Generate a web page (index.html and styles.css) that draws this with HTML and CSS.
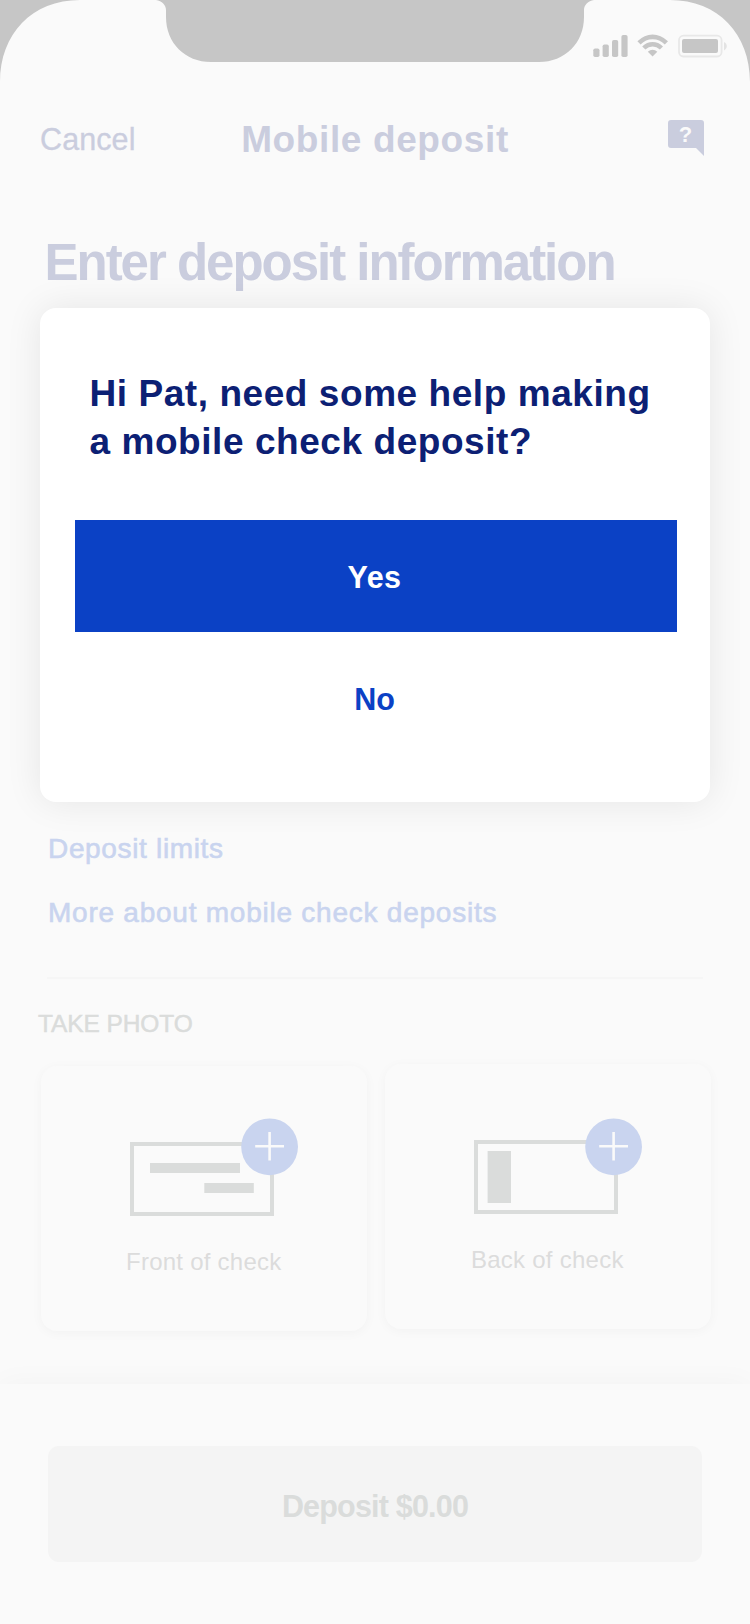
FILE: index.html
```
<!DOCTYPE html>
<html lang="en">
<head>
<meta charset="utf-8">
<title>Mobile deposit</title>
<link rel="stylesheet" href="styles.css">
</head>
<body>
<div class="screen">
  <div class="status-bar">
    <svg class="status-art" viewBox="0 0 750 90" width="750" height="90" aria-hidden="true">
      <path class="bezel" d="M0 0H80C32 0 0 34 0 82Z"/>
      <path class="bezel" d="M750 0H670C718 0 750 34 750 82Z"/>
      <path class="bezel" d="M156 0C162 1 166 5 166 10V17C166 43 185 62 211 62H539C565 62 584 43 584 17V10C584 5 588 1 594 0Z"/>
      <g class="glyph">
        <rect x="593.3" y="48.5" width="6.2" height="8.5" rx="1.8"/>
        <rect x="602.6" y="44.5" width="6.2" height="12.5" rx="1.8"/>
        <rect x="612" y="40" width="6.2" height="17" rx="1.8"/>
        <rect x="621.4" y="35" width="6.2" height="22" rx="1.8"/>
        <path d="M637.4 41.2Q644.4 34.4 652.6 34.4T668 41.2L664.8 44.4Q659.6 39.2 652.6 39.2T640.6 44.4Z"/>
        <path d="M642.2 46.4Q646.8 42 652.6 42T663 46.4L659.9 49.6Q656.6 46.5 652.6 46.5T645.4 49.6Z"/>
        <path d="M647.8 51.8Q650 49.8 652.6 49.8T657.3 51.8L652.6 56.6Z"/>
        <rect x="682" y="39" width="36" height="14" rx="2"/>
      </g>
      <rect class="battery-shell" x="679" y="35.7" width="42.6" height="20.8" rx="4.5"/>
      <path class="battery-tip" d="M724 42V50.4C727.7 48.6 727.7 43.8 724 42Z"/>
    </svg>
  </div>

  <header class="nav">
    <a class="nav-cancel">Cancel</a>
    <h1 class="nav-title">Mobile deposit</h1>
    <span class="nav-help">
      <svg viewBox="0 0 36 36" width="36" height="36" aria-hidden="true">
        <path d="M3 0H33Q36 0 36 3V36L28 28H3Q0 28 0 25V3Q0 0 3 0Z"/>
        <text x="17.6" y="22" text-anchor="middle">?</text>
      </svg>
    </span>
  </header>

  <main class="content">
    <h2 class="heading">Enter deposit information</h2>

    <nav class="links">
      <a class="link link-limits">Deposit limits</a>
      <a class="link link-more">More about mobile check deposits</a>
    </nav>
    <hr class="divider">

    <h3 class="section-label">TAKE PHOTO</h3>
    <div class="cards">
      <section class="card card-front">
        <svg class="check" viewBox="0 0 168 98" width="168" height="98" aria-hidden="true">
          <rect class="check-outline" x="2" y="26" width="140" height="70"/>
          <rect class="check-fill" x="20" y="45" width="90" height="10"/>
          <rect class="check-fill" x="74.3" y="65" width="49.5" height="10"/>
          <circle class="add" cx="139.6" cy="28.8" r="28.4"/>
          <path class="plus" d="M125.2 28.2H154M139.6 14V42.5"/>
        </svg>
        <p class="card-label">Front of check</p>
      </section>
      <section class="card card-back">
        <svg class="check" viewBox="0 0 168 98" width="168" height="98" aria-hidden="true">
          <rect class="check-outline" x="2" y="24" width="140" height="70"/>
          <rect class="check-fill" x="13.6" y="33" width="23.4" height="52"/>
          <circle class="add" cx="139.6" cy="28.8" r="28.4"/>
          <path class="plus" d="M125.2 28.2H154M139.6 14V42.5"/>
        </svg>
        <p class="card-label">Back of check</p>
      </section>
    </div>
  </main>

  <footer class="footer">
    <button class="deposit">Deposit $0.00</button>
  </footer>

  <div class="dialog" role="dialog">
    <p class="question">Hi Pat, need some help making<br>a mobile check deposit?</p>
    <button class="yes">Yes</button>
    <button class="no">No</button>
  </div>
</div>
</body>
</html>
```
FILE: styles.css
```
* {
  box-sizing: border-box;
}

body {
  margin: 0;
  font-family: "Liberation Sans", Arial, sans-serif;
}

h1, h2, h3, p {
  margin: 0;
}

button {
  border: 0;
  padding: 0;
  font-family: inherit;
}

.screen {
  position: relative;
  display: flex;
  flex-direction: column;
  width: 750px;
  height: 1624px;
  overflow: hidden;
  background: #fafafa;
}

.status-bar {
  height: 120px;
}

.status-art {
  display: block;
}

.bezel, .glyph {
  fill: #c6c6c6;
}

.battery-shell {
  fill: none;
  stroke: #e8e8e8;
  stroke-width: 1.8;
}

.battery-tip {
  fill: #e3e3e3;
}

.nav {
  display: grid;
  grid-template-columns: 1fr auto 1fr;
  height: 113px;
  padding: 0 46px 0 40px;
  color: #cacdde;
  line-height: 40px;
}

.nav-cancel {
  margin-top: -1px;
  font-size: 30.5px;
  letter-spacing: 0.1px;
  -webkit-text-stroke: 0.3px;
}

.nav-title {
  margin-left: 6px;
  font-size: 37px;
  font-weight: bold;
  letter-spacing: 0.62px;
}

.nav-help {
  justify-self: end;
  line-height: 0;
}

.nav-help path {
  fill: #cacdde;
}

.nav-help text {
  fill: #fafafa;
  font-size: 22px;
  font-weight: bold;
}

.content {
  display: flex;
  flex-direction: column;
  height: 1151px;
}

.heading {
  padding-left: 44.5px;
  color: #cacdde;
  font-size: 51px;
  line-height: 60px;
  letter-spacing: -2.02px;
}

.links {
  display: flex;
  flex-direction: column;
  gap: 24px;
  margin-top: 536px;
  padding-left: 48px;
  color: #c9d4ef;
  font-size: 28px;
  line-height: 40px;
}

.link {
  -webkit-text-stroke: 0.6px;
}

.link-limits {
  letter-spacing: 0.66px;
}

.link-more {
  letter-spacing: 0.76px;
}

.divider {
  width: 656px;
  height: 2px;
  margin: 44px 0 0 47px;
  border: 0;
  background: #f6f6f6;
}

.section-label {
  margin-top: 25px;
  padding-left: 38px;
  color: #dadcdb;
  font-size: 24.5px;
  font-weight: normal;
  line-height: 40px;
  letter-spacing: -0.1px;
  -webkit-text-stroke: 0.5px;
}

.cards {
  display: flex;
  align-items: flex-start;
  gap: 18px;
  margin-top: 20px;
  padding-left: 41px;
}

.card {
  display: flex;
  flex-direction: column;
  width: 326px;
  height: 265px;
  border-radius: 16px;
  background: #fafafa;
  box-shadow: 0 2px 12px rgba(0, 0, 0, 0.035);
}

.card-front {
  margin-top: 2px;
  padding: 52px 0 0 89px;
}

.card-back {
  padding: 54px 0 0 89px;
}

.card-label {
  margin-left: -4px;
  color: #dcdcdc;
  font-size: 24px;
  line-height: 32px;
  letter-spacing: 0.25px;
}

.card-front .card-label {
  margin-top: 30px;
}

.card-back .card-label {
  margin-top: 28px;
  margin-left: -3px;
}

.footer {
  flex: 1;
  padding: 62px 48px 0;
  background: #fafafa;
  box-shadow: 0 0 28px rgba(0, 0, 0, 0.035);
}

.deposit {
  display: block;
  width: 654px;
  height: 116px;
  padding-top: 5px;
  border-radius: 11px;
  background: #f4f4f4;
  color: #dadcdb;
  font-size: 30.5px;
  font-weight: bold;
  letter-spacing: -0.8px;
}

.check {
  display: block;
  overflow: visible;
}

.check-outline {
  fill: none;
  stroke: #dadcdb;
  stroke-width: 4;
}

.check-fill {
  fill: #dadcdb;
}

.add {
  fill: #c9d4ef;
}

.plus {
  fill: none;
  stroke: #fafafa;
  stroke-width: 2.6;
}

.dialog {
  position: absolute;
  top: 308px;
  left: 40px;
  display: flex;
  flex-direction: column;
  width: 670px;
  height: 494px;
  padding: 62px 33px 0 35px;
  border-radius: 16px;
  background: #fff;
  box-shadow: 0 0 36px rgba(0, 0, 0, 0.085);
}

.question {
  padding-left: 14.5px;
  color: #0c2074;
  font-size: 37px;
  font-weight: bold;
  line-height: 48px;
  letter-spacing: 0.56px;
  white-space: nowrap;
}

.yes, .no {
  height: 112px;
  font-size: 30.5px;
  font-weight: bold;
}

.yes {
  margin-top: 54px;
  padding: 3px 3px 0 0;
  background: #0b41c5;
  color: #fff;
  letter-spacing: 0.4px;
}

.no {
  margin-top: 11px;
  padding-right: 3px;
  background: none;
  color: #0b41c5;
}
```
